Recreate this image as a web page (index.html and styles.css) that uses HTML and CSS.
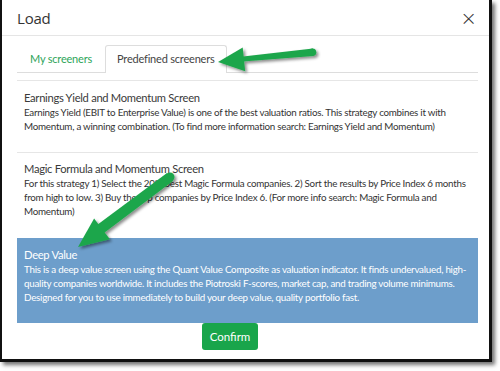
FILE: index.html
```html
<!DOCTYPE html>
<html>
<head>
<meta charset="utf-8">
<link rel="stylesheet" href="styles.css">
</head>
<body>
<div class="modal">
  <div class="modal-header">
    <span class="modal-title">Load</span>
    <span class="close">&times;</span>
  </div>
  <div class="modal-body">
    <div class="tabs">
      <div class="tab">My screeners</div>
      <div class="tab active">Predefined screeners</div>
    </div>
    <div class="list">
      <div class="item first">
        <div class="item-title">Earnings Yield and Momentum Screen</div>
        <div class="item-desc">Earnings Yield (EBIT to Enterprise Value) is one of the best valuation ratios. This strategy combines it with Momentum, a winning combination. (To find more information search: Earnings Yield and Momentum)</div>
      </div>
      <div class="item">
        <div class="item-title">Magic Formula and Momentum Screen</div>
        <div class="item-desc">For this strategy 1) Select the 20% best Magic Formula companies. 2) Sort the results by Price Index 6 months from high to low. 3) Buy the top companies by Price Index 6. (For more info search: Magic Formula and Momentum)</div>
      </div>
      <div class="item selected">
        <div class="item-title">Deep Value</div>
        <div class="item-desc">This is a deep value screen using the Quant Value Composite as valuation indicator. It finds undervalued, high-quality companies worldwide. It includes the Piotroski F-scores, market cap, and trading volume minimums. Designed for you to use immediately to build your deep value, quality portfolio fast.</div>
      </div>
    </div>
    <div class="footer">
      <button class="btn-confirm">Confirm</button>
    </div>
  </div>
</div>
<svg class="arrows" width="500" height="371" viewBox="0 0 500 371">
  <defs>
    <filter id="sh" x="-20%" y="-20%" width="140%" height="140%">
      <feDropShadow dx="2" dy="2" stdDeviation="1.5" flood-color="#000" flood-opacity="0.45"/>
    </filter>
  </defs>
  <g fill="#1fa64c" filter="url(#sh)">
    <polygon points="313,48.5 313.5,56 243,61.5 243,56.5"/>
    <circle cx="312.5" cy="52.3" r="3.8"/>
    <polygon points="218,62 242.7,47.4 245.2,71.2"/>
    <polygon points="167,173 173,181 104,233 97,225"/>
    <circle cx="170" cy="177" r="4.5"/>
    <polygon points="78,247 94.1,218.6 109.9,239.3"/>
  </g>
</svg>
</body>
</html>
```

FILE: styles.css
```css
html, body {
  margin: 0;
  padding: 0;
  background: #ffffff;
}

body {
  width: 500px;
  height: 371px;
  overflow: hidden;
  position: relative;
  font-family: "Lato", "Open Sans", sans-serif;
  color: #333333;
}

.modal {
  width: 492px;
  height: 362px;
  box-sizing: border-box;
  border-left: 2px solid #111;
  border-right: 3px solid #111;
  border-bottom: 3px solid #111;
  box-shadow: 3px 3px 4px rgba(0, 0, 0, 0.55);
  background: #fff;
  display: flex;
  flex-direction: column;
}

.modal-header {
  flex: 0 0 auto;
  height: 35px;
  border-bottom: 1px solid #e5e5e5;
  display: flex;
  align-items: center;
  justify-content: space-between;
  padding: 0 12px 0 15px;
}

.modal-title {
  font-family: "Open Sans", sans-serif;
  font-size: 15px;
  letter-spacing: -0.2px;
  color: #333;
  line-height: 20px;
}

.close {
  font-size: 20px;
  line-height: 20px;
  color: #333;
  font-family: "DejaVu Sans", sans-serif;
  font-weight: 300;
}

.modal-body {
  padding: 9px 11px 0 15px;
  display: flex;
  flex-direction: column;
}

.tabs {
  display: flex;
  flex: 0 0 auto;
  height: 27px;
  border-bottom: 1px solid #dddddd;
}

.tab {
  font-size: 11px;
  letter-spacing: -0.2px;
  line-height: 27px;
  padding: 0 13px;
  color: #2ea55a;
  white-space: nowrap;
}

.tab.active {
  padding: 0 11px;
  color: #444;
  border: 1px solid #dddddd;
  border-bottom: none;
  border-radius: 3px 3px 0 0;
  background: #fff;
  height: 28px;
  margin-bottom: -1px;
  box-sizing: border-box;
  line-height: 26px;
}

.list {
  margin-top: 7px;
  display: flex;
  flex-direction: column;
}

.item {
  border-top: 1px solid #e6e6e6;
  padding: 8px 8px 20px 7px;
}

.item.first {
  padding-top: 9px;
  padding-bottom: 19px;
}

.item-title {
  font-size: 11.2px;
  letter-spacing: -0.3px;
  line-height: 15px;
  color: #3a3a3a;
}

.item-desc {
  font-size: 9.8px;
  letter-spacing: -0.25px;
  line-height: 14px;
  color: #333;
}

.item.selected {
  background: #6d9ecb;
  border-top-color: #6d9ecb;
  padding-bottom: 19px;
}

.item.selected .item-title,
.item.selected .item-desc {
  color: #ffffff;
}

.footer {
  display: flex;
  padding-left: 185px;
}

.btn-confirm {
  width: 56px;
  height: 27px;
  border: none;
  border-radius: 3px;
  background: #19a54b;
  color: #ffffff;
  font-family: "Lato", sans-serif;
  font-size: 11.5px;
  padding: 0;
}

.arrows {
  position: absolute;
  left: 0;
  top: 0;
  pointer-events: none;
}
```
